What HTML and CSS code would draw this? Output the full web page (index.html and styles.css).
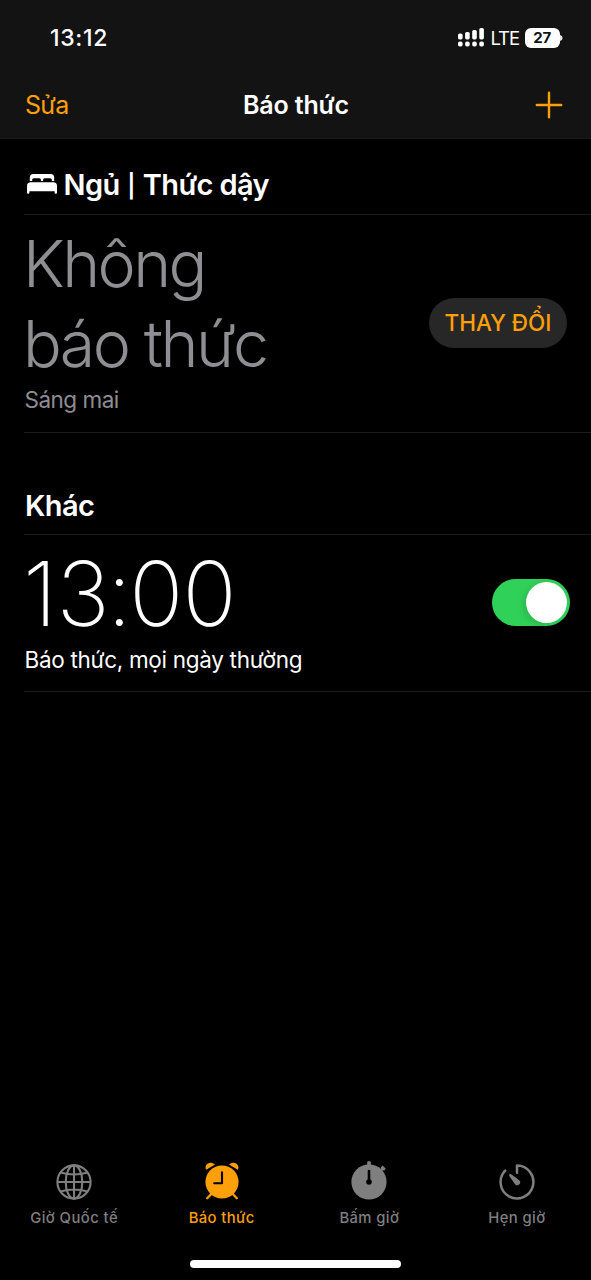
FILE: index.html
```html
<!DOCTYPE html>
<html lang="vi">
<head>
<meta charset="utf-8">
<title>Báo thức</title>
<link rel="stylesheet" href="styles.css">
</head>
<body>
<div class="screen">
  <header class="header">
    <div class="status">
      <span class="clock">13:12</span>
      <div class="indicators">
        <svg class="signal" width="26" height="19" viewBox="0 0 26 19" fill="#fff">
          <rect x="0" y="5.6" width="4.6" height="5.8" rx="1.6"/><rect x="7.1" y="4" width="4.6" height="7.4" rx="1.6"/><rect x="14.2" y="2" width="4.6" height="9.4" rx="1.6"/><rect x="21.3" y="0" width="4.6" height="11.4" rx="1.6"/>
          <rect x="0" y="13.6" width="4.6" height="5" rx="1.8"/><rect x="7.1" y="13.6" width="4.6" height="5" rx="1.8"/><rect x="14.2" y="13.6" width="4.6" height="5" rx="1.8"/><rect x="21.3" y="13.6" width="4.6" height="5" rx="1.8"/>
        </svg>
        <span class="network">LTE</span>
        <span class="battery">27</span>
        <svg class="battery-cap" width="3" height="8" viewBox="0 0 3 8"><path d="M0 1Q2.6 1.6 2.6 4Q2.6 6.4 0 7Z" fill="#e4e4e4"/></svg>
      </div>
    </div>
    <nav class="navbar">
      <span class="edit">Sửa</span>
      <h1 class="title">Báo thức</h1>
      <svg class="add" width="28" height="28" viewBox="0 0 28 28" stroke="#ff9f0a" stroke-width="2.4" stroke-linecap="round"><path d="M14 1.8V26.2M1.8 14H26.2"/></svg>
    </nav>
  </header>

  <main class="content">
    <section class="sleep">
      <h2 class="heading sleep-heading">
        <svg class="bed" width="30" height="20" viewBox="0 0 30 20" fill="#fff">
          <path d="M2.8 7V3.5Q2.8 0 6.3 0H23.7Q27.2 0 27.2 3.5V7H24.8V5.8Q24.8 4.2 23.2 4.2H17.7Q16.1 4.2 16.1 5.8V7H13.9V5.8Q13.9 4.2 12.3 4.2H6.8Q5.2 4.2 5.2 5.8V7Z"/>
          <path d="M0 12Q0 8.3 3.7 8.3H26.3Q30 8.3 30 12V18.5Q30 19.7 28.8 19.7Q27.6 19.7 27.6 18.5V17.2H2.4V18.5Q2.4 19.7 1.2 19.7Q0 19.7 0 18.5Z"/>
        </svg>
        <span class="sleep-title">Ngủ <span class="bar">|</span> Thức dậy</span>
      </h2>
      <div class="row sleep-row">
        <div>
          <div class="no-alarm"><div>Không</div><div>báo thức</div></div>
          <div class="tomorrow">Sáng mai</div>
        </div>
        <div class="change"><span>THAY ĐỔI</span></div>
      </div>
    </section>
    <section class="other">
      <h2 class="heading other-heading"><span class="other-title">Khác</span></h2>
      <div class="row alarm-row">
        <div>
          <div class="time">13<span class="colon">:</span>00</div>
          <div class="repeat">Báo thức, mọi ngày thường</div>
        </div>
        <div class="toggle"><div class="knob"></div></div>
      </div>
    </section>
  </main>

  <footer class="tabs">
    <div class="tab">
      <svg width="40" height="42" viewBox="-20 -21 40 42" fill="none" stroke="#7f7f7f" stroke-width="2.1">
        <circle r="16.6"/><ellipse rx="8.3" ry="16.6"/><path d="M0-16.6V16.6M-16.6 0H16.6M-13.6-9.5Q0-5.4 13.6-9.5M-13.6 9.5Q0 5.4 13.6 9.5"/>
      </svg>
      <span class="world">Giờ Quốc tế</span>
    </div>
    <div class="tab active">
      <svg width="40" height="42" viewBox="-20 -21 40 42">
        <g fill="#ff9f0a"><path d="M-15.7-12.2C-18.5-16.5-13-22.4-7-17.5Z"/><path d="M15.7-12.2C18.5-16.5 13-22.4 7-17.5Z"/></g>
        <circle r="17.6"/><circle r="16.6" fill="#ff9f0a"/>
        <path d="M-11 12.2L-14.8 16.2M11 12.2L14.8 16.2" stroke="#ff9f0a" stroke-width="2.3" stroke-linecap="round"/>
        <path d="M0-9.6V1.2H-7.8" fill="none" stroke="#000" stroke-width="2.1" stroke-linecap="round" stroke-linejoin="round"/>
      </svg>
      <span>Báo thức</span>
    </div>
    <div class="tab">
      <svg width="40" height="42" viewBox="-20 -21 40 42">
        <circle r="17.6" fill="#7f7f7f"/>
        <path d="M0-19.2V-15" stroke="#7f7f7f" stroke-width="3.8" stroke-linecap="round"/>
        <path d="M11-11L14.6-14.2M12.7-15.4L15.8-12.3" stroke="#7f7f7f" stroke-width="2.8"/>
        <circle r="2.8" fill="#000"/><path d="M0-11V0" stroke="#000" stroke-width="2.6" stroke-linecap="round"/>
      </svg>
      <span>Bấm giờ</span>
    </div>
    <div class="tab">
      <svg width="40" height="42" viewBox="-20 -21 40 42">
        <path d="M0-9.2V-16.4A16.4 16.4 0 1 1-11.8-11.4" fill="none" stroke="#7f7f7f" stroke-width="2.5" stroke-linecap="round" stroke-linejoin="round"/>
        <path d="M-7.7-7.5C-7-8.3-6.2-7.9-5.4-7.4L2.2-1.8A2.9 2.9 0 0 1-1.8 2.4L-7.2-5.2C-7.8-6-8.2-6.8-7.7-7.5Z" fill="#7f7f7f"/>
      </svg>
      <span>Hẹn giờ</span>
    </div>
  </footer>
  <div class="home-indicator"></div>
</div>
</body>
</html>
```
FILE: styles.css
```css
* { box-sizing: border-box; }
body { margin: 0; background: #000; color: #fff; font-family: Inter, "Noto Sans", sans-serif; }
h1, h2 { margin: 0; }
svg { display: block; flex: none; overflow: visible; }
.screen { width: 591px; height: 1280px; display: flex; flex-direction: column; overflow: hidden; white-space: nowrap; }

.header { height: 139px; background: #131313; border-bottom: 1px solid #1b1b1b; flex: none; }
.status { display: flex; justify-content: space-between; height: 76px; padding: 0 28px 0 50px; align-items: center; }
.clock { font-size: 23px; font-weight: 540; letter-spacing: .7px; }
.indicators { display: flex; align-items: center; padding-bottom: 1px; }
.signal { margin-right: 7px; }
.network { font-size: 18.5px; width: 34.5px; letter-spacing: -1.1px; padding-top: 1px; }
.battery { width: 34.5px; height: 20px; border-radius: 6px; background: #fff; color: #131313; font-size: 15px; font-weight: 700; line-height: 20px; text-align: center; }
.battery-cap { margin-left: .5px; }
.navbar { display: grid; grid-template-columns: 1fr auto 1fr; align-items: center; height: 58px; padding: 0 28px 0 25px; }
.edit { color: #ff9f0a; font-size: 25px; letter-spacing: -.7px; }
.title { font-size: 25px; font-weight: 600; letter-spacing: -.15px; margin: 0 -2px 0 2px; }
.add { justify-self: end; }

.content { flex: 1; }
.heading { height: 76px; margin-left: 24px; border-bottom: 1px solid #1c1c1c; display: flex; align-items: flex-start; font-size: 29px; font-weight: 600; line-height: 32px; letter-spacing: -.6px; }
.sleep-heading { padding: 30px 0 0 3px; }
.bed { margin: 5px 6.5px 0 0; }
.bar { font-size: 23px; display: inline-block; margin: 0 1px; line-height: 20px; vertical-align: 1px; }
.row { display: flex; justify-content: space-between; margin-left: 24px; border-bottom: 1px solid #1c1c1c; }
.sleep-row { height: 218px; padding: 10px 24px 0 0; align-items: flex-start; }
.no-alarm { color: #8e8e93; font-size: 64.5px; font-weight: 330; line-height: 79.5px; letter-spacing: -2.6px; margin-left: -1px; }
.tomorrow { color: #8e8e93; font-size: 22.5px; line-height: 32px; letter-spacing: -.5px; margin-left: .5px; }
.change { width: 138px; height: 50px; margin-top: 73px; border-radius: 25px; background: #272727; color: #ff9f0a; font-size: 22.5px; font-weight: 500; line-height: 50px; text-align: center; }
.other-heading { height: 102px; padding: 57px 0 0 1px; }
.alarm-row { height: 157px; padding: 14px 21px 0 0; align-items: flex-start; }
.time { font-size: 89.5px; font-weight: 220; line-height: 90px; margin-left: -1px; letter-spacing: -.6px; }
.colon { margin: 0 -2px 0 -2px; }
.repeat { font-size: 22.5px; line-height: 32px; letter-spacing: -.3px; margin: 5px 0 0 .5px; }
.toggle { width: 78px; height: 47px; margin-top: 30px; padding: 3px; border-radius: 24px; background: #30d158; display: flex; justify-content: flex-end; }
.knob { width: 41px; height: 41px; border-radius: 50%; background: #fff; box-shadow: -3px 2px 6px rgba(0,0,0,.12); }

.tabs { display: grid; grid-template-columns: repeat(4, 147.6px); height: 99px; padding-left: .3px; color: #7f7f7f; font-size: 14.8px; font-weight: 450; letter-spacing: .4px; flex: none; }
.tab { display: flex; flex-direction: column; align-items: center; gap: 5px; line-height: 20px; }
.world { letter-spacing: .45px; }
.active { color: #ff9f0a; }
.home-indicator { width: 211px; height: 8px; margin: 0 auto 12px; border-radius: 4px; background: #fff; flex: none; }
```
